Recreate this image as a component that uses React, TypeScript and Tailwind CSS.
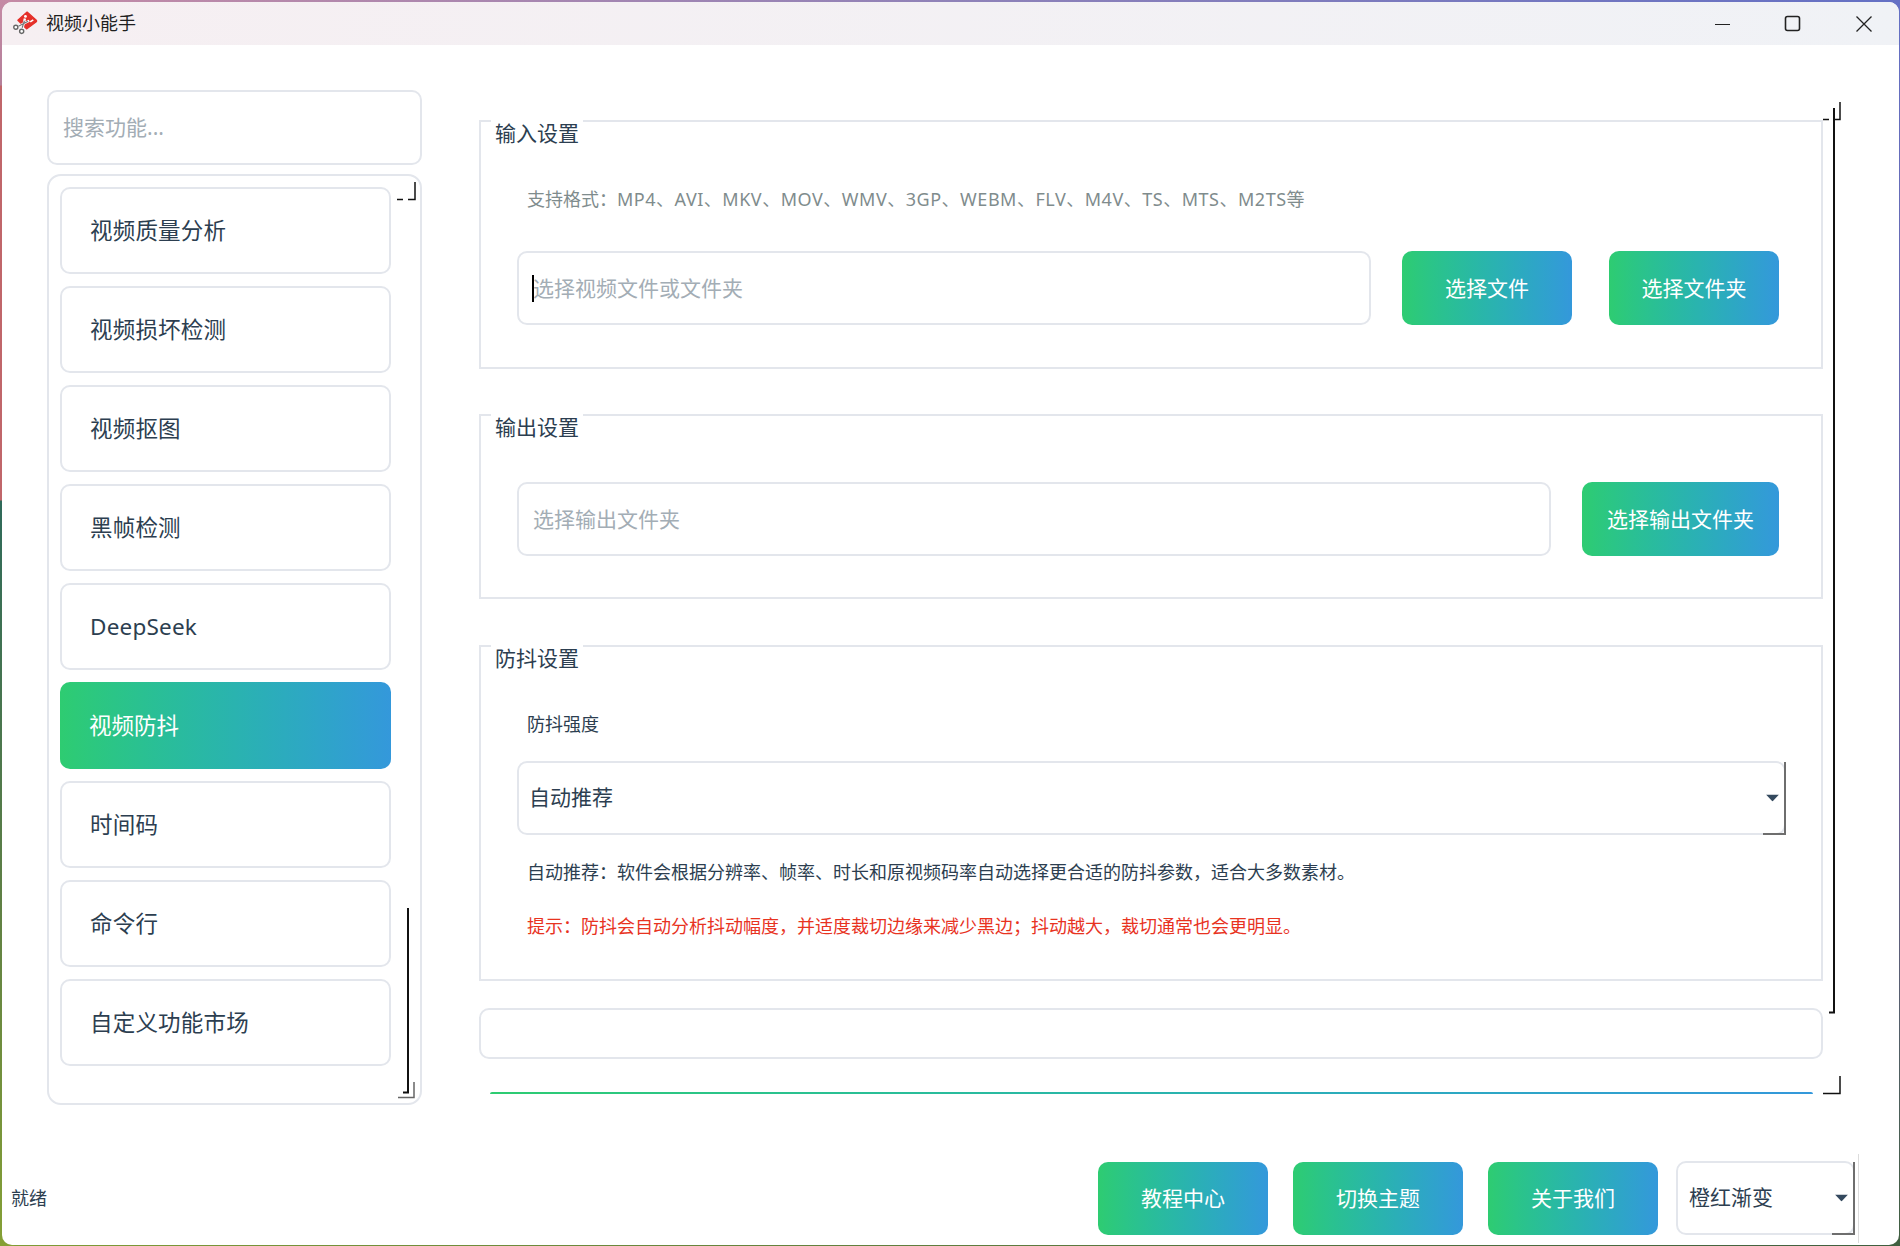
const navItems = ['视频质量分析', '视频损坏检测', '视频抠图', '黑帧检测', 'DeepSeek', '视频防抖', '时间码', '命令行', '自定义功能市场'];

function AppIcon() {
  return (
    <svg width="26" height="26" viewBox="0 0 24 24" className="-ml-px shrink-0">
      <path d="M13 1 21.5 8.6a1 1 0 0 1 0 1.4L12.5 16.5 4.5 8.5Z" fill="#e5302a" stroke="#e5302a" strokeWidth="1.2" strokeLinejoin="round" />
      <circle cx="11.5" cy="5" r="1.3" fill="#fff" />
      <rect x="15.5" y="8.5" width="3.4" height="1.5" fill="#fff" transform="rotate(-35 17 9)" />
      <path d="M15 9 4 14.5M11 7 8.5 17" stroke="#fff" strokeWidth="2.2" />
      <path d="M14 9.5 5 14M10.5 9 8.5 15.5" stroke="#777" strokeWidth="1.1" />
      <circle cx="2.6" cy="15" r="1.9" fill="#fff" stroke="#666" strokeWidth="1.3" />
      <circle cx="8" cy="18.8" r="1.9" fill="#fff" stroke="#666" strokeWidth="1.3" />
    </svg>
  );
}

function WindowControls() {
  return (
    <div className="ml-auto flex items-center">
      <svg width="15" height="20" viewBox="0 0 15 20" className="mr-[54px]" fill="none" stroke="#222">
        <path d="M0 10.5h15" strokeWidth="1.2" />
      </svg>
      <svg width="17" height="17" viewBox="0 0 17 17" className="mr-[55px]" fill="none" stroke="#222">
        <rect x="1.5" y="1.5" width="14" height="14" rx="2" strokeWidth="1.6" />
      </svg>
      <svg width="16" height="16" viewBox="0 0 16 16" className="mr-[27px]" fill="none" stroke="#222">
        <path d="M.5.5l15 15M15.5.5l-15 15" strokeWidth="1.3" />
      </svg>
    </div>
  );
}

function GradientButton({ children, width, height = 'h-[74px] pt-[2px]' }: { children: string; width: string; height?: string }) {
  return (
    <button className={`${width} ${height} shrink-0 rounded-[10px] bg-gradient-to-r from-[#2ecc71] to-[#3498db] text-[21px] text-white`}>
      {children}
    </button>
  );
}

function Panel({ title, className, children }: { title: string; className: string; children: React.ReactNode }) {
  return (
    <section className={`relative border-2 border-[#e3e6ec] ${className}`}>
      <h3 className="absolute -top-[2px] left-[10px] h-[28px] bg-white px-[4px] text-[21px] font-normal leading-[26px] text-[#2c3e50]">{title}</h3>
      {children}
    </section>
  );
}

function PathInput({ placeholder, caret }: { placeholder: string; caret?: boolean }) {
  return (
    <div className="relative min-w-0 flex-1">
      <input
        readOnly
        placeholder={placeholder}
        className="h-[74px] w-full rounded-[10px] border-2 border-[#e3e6ec] bg-white px-[14px] text-[21px] outline-none placeholder:text-[#a3adb5]"
      />
      {caret && <span className="absolute left-[15px] top-[24px] h-[27px] w-[2px] bg-black" />}
    </div>
  );
}

function Combo({ value, className }: { value: string; className: string }) {
  return (
    <div className={`relative flex items-center rounded-[10px] border-2 border-[#e3e6ec] bg-white text-[21px] text-[#2c3e50] ${className}`}>
      {value}
      <svg width="13" height="7" viewBox="0 0 13 7" className="absolute right-[5px] top-1/2 -translate-y-1/2" fill="#34495e">
        <path d="M0 0h13L6.5 7Z" />
      </svg>
      <span className="absolute -right-[2px] -top-[1px] bottom-[-2px] w-[2px] bg-[#6e6e6e]" />
      <span className="absolute -right-[2px] bottom-[-2px] h-[2px] w-[23px] bg-[#6e6e6e]" />
    </div>
  );
}

function Sidebar() {
  return (
    <aside className="ml-[45px] mt-[45px] w-[375px] shrink-0">
      <input
        readOnly
        placeholder="搜索功能..."
        className="h-[75px] w-full rounded-[10px] border-2 border-[#e3e6ec] bg-white px-[14px] pb-[2px] text-[21px] outline-none placeholder:text-[#a3adb5]"
      />
      <div className="relative mt-[9px] flex h-[931px] flex-col gap-[12px] rounded-[14px] border-2 border-[#e3e6ec] pl-[11px] pt-[11px]">
        {navItems.map((item) =>
          item === '视频防抖' ? (
            <div key={item} className="flex h-[87px] w-[331px] items-center rounded-[10px] bg-gradient-to-r from-[#2ecc71] to-[#3498db] pl-[29px] text-[22.5px] text-white">
              {item}
            </div>
          ) : (
            <div key={item} className="flex h-[87px] w-[331px] items-center rounded-[10px] border-2 border-[#e3e6ec] pl-[28px] text-[22.5px] tracking-[0.2px] text-[#2c3e50]">
              {item}
            </div>
          ),
        )}
        {/* leftover scrollbar paint */}
        <svg className="pointer-events-none absolute inset-0 h-full w-full" fill="none" stroke="#111" strokeWidth="1.5">
          <path d="M348 23.5h6M359 23.5h7V6" />
          <path d="M354 916.5h5V732" strokeWidth="2" />
          <path d="M349 921.5h16V906" stroke="#666" />
        </svg>
      </div>
    </aside>
  );
}

function MainArea() {
  return (
    <main className="relative ml-[57px] mt-[75px] w-[1344px] shrink-0">
      <Panel title="输入设置" className="h-[249px] pl-[36px] pr-[42px] pt-[63px]">
        <p className="ml-[10px] text-[18px] leading-[28px] text-[#7f8c8d]">
          支持格式：<span className="tracking-[0.52px]">MP4、AVI、MKV、MOV、WMV、3GP、WEBM、FLV、M4V、TS、MTS、M2TS等</span>
        </p>
        <div className="mt-[38px] flex">
          <PathInput placeholder="选择视频文件或文件夹" caret />
          <div className="ml-[31px] flex gap-[37px]">
            <GradientButton width="w-[170px]">选择文件</GradientButton>
            <GradientButton width="w-[170px]">选择文件夹</GradientButton>
          </div>
        </div>
      </Panel>
      <Panel title="输出设置" className="mt-[45px] h-[185px] pl-[36px] pr-[42px] pt-[66px]">
        <div className="flex gap-[31px]">
          <PathInput placeholder="选择输出文件夹" />
          <GradientButton width="w-[197px]">选择输出文件夹</GradientButton>
        </div>
      </Panel>
      <Panel title="防抖设置" className="mt-[46px] h-[336px] pl-[36px] pr-[35px] pt-[63px]">
        <p className="ml-[10px] text-[18px] leading-[28px] text-[#2c3e50]">防抖强度</p>
        <Combo value="自动推荐" className="mt-[23px] h-[74px] pl-[10px]" />
        <p className="ml-[10px] mt-[23px] text-[18px] leading-[28px] text-[#2c3e50]">
          自动推荐：软件会根据分辨率、帧率、时长和原视频码率自动选择更合适的防抖参数，适合大多数素材。
        </p>
        <p className="ml-[10px] mt-[26px] text-[18px] leading-[28px] text-[#e8331f]">
          提示：防抖会自动分析抖动幅度，并适度裁切边缘来减少黑边；抖动越大，裁切通常也会更明显。
        </p>
      </Panel>
      <div className="mt-[27px] h-[51px] rounded-[10px] border-2 border-[#e3e6ec]" />
      <div className="ml-[11px] mr-[10px] mt-[33px] h-[2px] rounded-t-[2px] bg-gradient-to-r from-[#2ecc71] to-[#3498db]" />
      {/* leftover scrollbar paint */}
      <svg className="pointer-events-none absolute -top-[20px] left-0 h-[1000px] w-[1400px]" fill="none" stroke="#111" strokeWidth="1.5">
        <path d="M1344 19.5h6M1355 19.5h6V2" />
        <path d="M1350 912.5h5V8" strokeWidth="2" />
        <path d="M1344 993.5h17V976" />
      </svg>
    </main>
  );
}

function Footer() {
  return (
    <footer className="relative mb-[10px] flex h-[74px] items-center pl-[9px]">
      <span className="text-[18px] text-[#2c3e50]">就绪</span>
      <div className="ml-auto flex items-end gap-[25px] pr-[44px]">
        <GradientButton width="w-[170px]" height="h-[73px] pt-px">教程中心</GradientButton>
        <GradientButton width="w-[170px]" height="h-[73px] pt-px">切换主题</GradientButton>
        <GradientButton width="w-[170px]" height="h-[73px] pt-px">关于我们</GradientButton>
        <Combo value="橙红渐变" className="-ml-[7px] h-[74px] w-[179px] pl-[11px]" />
      </div>
      <span className="absolute -bottom-[8px] right-[40px] h-[89px] w-px bg-[#dcdcdc]" />
    </footer>
  );
}

export default function App() {
  return (
    <div lang="zh-CN" className="relative flex h-screen w-screen overflow-hidden bg-white pb-px pl-[2px] pr-px pt-[2px] font-['Noto_Sans','Noto_Sans_CJK_SC',sans-serif]">
      {/* wallpaper showing around the window edge */}
      <div className="absolute inset-x-0 top-0 h-[14px] bg-gradient-to-r from-[#c58aa5] via-[#8f82b8] to-[#6470c4]" />
      <div className="absolute inset-x-0 bottom-0 h-[14px] bg-gradient-to-r from-[#7f9c35] to-[#3f5f3f]" />
      <div className="absolute bottom-0 left-0 top-0 w-[14px] bg-[linear-gradient(to_bottom,#c58aa5_0,#b4809a_85px,#c0666a_86px,#c0666a_500px,#2f6a5a_501px,#5f8045_900px,#85a035_100%)]" />
      <div className="absolute bottom-0 right-0 top-0 w-[14px] bg-[linear-gradient(to_bottom,#6470c4_0,#6a5f95_800px,#3f5f3f_100%)]" />

      <div className="relative flex min-w-0 flex-1 flex-col overflow-hidden rounded-[10px] bg-white">
        <header className="flex h-[43px] shrink-0 items-center bg-gradient-to-r from-[#f6eff2] to-[#f0f2f6] pl-[12px]">
          <AppIcon />
          <span className="ml-[7px] text-[18px] text-[#1f1f1f]">视频小能手</span>
          <WindowControls />
        </header>
        <div className="flex min-h-0 flex-1">
          <Sidebar />
          <MainArea />
        </div>
        <Footer />
      </div>
    </div>
  );
}
